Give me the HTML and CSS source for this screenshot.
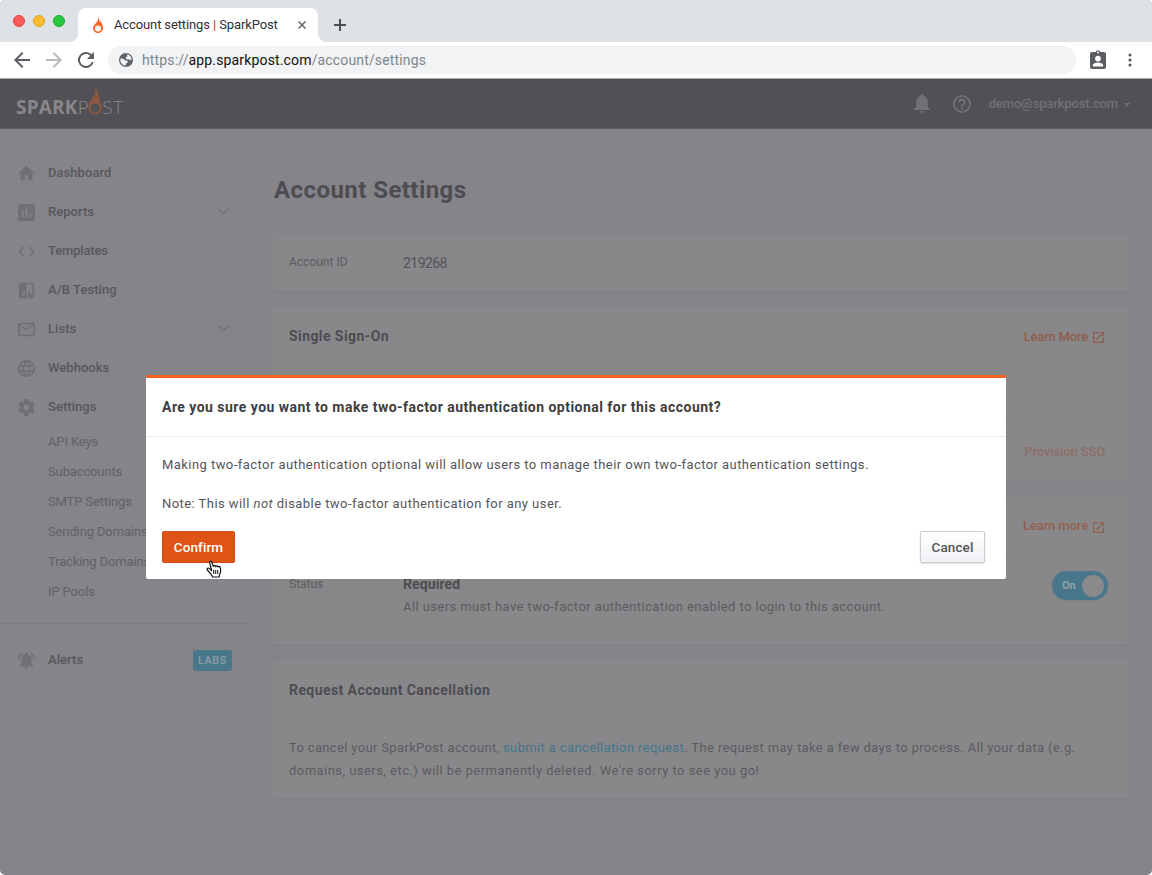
FILE: index.html
```html
<!DOCTYPE html>
<html lang="en">
<head>
<meta charset="utf-8">
<title>Account settings | SparkPost</title>
<link rel="stylesheet" href="styles.css">
</head>
<body>
<div class="window">
  <div class="tabstrip">
    <div class="lights"><i class="light red"></i><i class="light yellow"></i><i class="light green"></i></div>
    <div class="tab">
      <svg class="favicon" width="10" height="18" viewBox="0 0 20 34"><path fill="#fa6423" fill-rule="evenodd" d="M10 0c3 5 2 8 3 11 1-1 1-2 1-3 3 5 6 9 6 14a10 10 0 0 1-20 2c0-6 4-8 7-12 3-4 4-7 3-12zM10 18a6 6 0 1 0 0 12 6 6 0 0 0 0-12z"/></svg>
      <span class="tab-title">Account settings <b>|</b> SparkPost</span>
      <svg class="tab-close" width="8" height="8" viewBox="0 0 8 8"><path d="M.5.5l7 7M7.500.5l-7 7" stroke="#5f6368" stroke-width="1.5"/></svg>
    </div>
    <svg class="newtab" width="12" height="12" viewBox="0 0 12 12"><path d="M6 0v12M0 6h12" stroke="#4d5156" stroke-width="2"/></svg>
  </div>
  <div class="toolbar">
    <svg width="16" height="16" viewBox="4 4 16 16"><path fill="#5a5d62" d="M20 11H7.830l5.590-5.590L12 4l-8 8 8 8 1.410-1.410L7.830 13H20z"/></svg>
    <svg width="16" height="16" viewBox="4 4 16 16"><path fill="#b9bbbd" d="M12 4l-1.410 1.410L16.170 11H4v2h12.170l-5.580 5.590L12 20l8-8z"/></svg>
    <svg width="16" height="16" viewBox="4 4 16 16"><path fill="#5a5d62" d="M17.650 6.350A8 8 0 1 0 19.730 14h-2.080A6 6 0 1 1 12 6c1.660 0 3.140.69 4.220 1.780L13 11h7V4z"/></svg>
    <div class="address">
      <svg width="14" height="14" viewBox="0 0 14 14"><circle cx="7" cy="7" r="7" fill="#5f6368"/><path fill="#f1f3f4" d="M7.500 1.300c2.800.2 4.900 2.400 5.200 5l-1.500.9-1.300-.9-1.800.2-1.400-1.200.6-1.500 1.400-.6zM1.500 5.500l3 .3 1.700 1.600 2.200.4.400 1.500-1.600 1.100-.6 2.200C3.700 12.300 1.300 9.800 1.300 7z"/></svg>
      <span class="url">https://<b>app.sparkpost.com</b>/account/settings</span>
    </div>
    <svg class="badge-icon" width="16" height="19" viewBox="0 0 16 19"><path fill="#5a5d62" fill-rule="evenodd" d="M2 2h3.700a2.400 2.400 0 0 1 4.600 0H14a2 2 0 0 1 2 2v13a2 2 0 0 1-2 2H2a2 2 0 0 1-2-2V4a2 2 0 0 1 2-2zM8 1.500a1 1 0 1 0 0 2 1 1 0 0 0 0-2zM8 5.700a2.900 2.900 0 1 0 0 5.800 2.900 2.900 0 0 0 0-5.800zM2.800 16.500h10.400v-1.200c0-2-3.400-2.900-5.200-2.900s-5.200.9-5.200 2.900z"/></svg>
    <svg width="4" height="14" viewBox="0 0 4 14"><g fill="#4f5257"><circle cx="2" cy="2" r="1.500"/><circle cx="2" cy="7" r="1.500"/><circle cx="2" cy="12" r="1.500"/></g></svg>
  </div>

  <header class="topbar">
    <div class="logo"><strong>SPARK</strong><span class="logo-p">P</span><svg class="flame" width="14" height="28" viewBox="0 0 14 29"><path fill="#8a5743" fill-rule="evenodd" d="M6.500 0c3.700 3.600 4 6.500 3.500 10 .7-.5.900-1.200.9-2 1 3 .5 5 1.100 7.500 1 2 2 3.500 2 6A7 7 0 0 1 0 21.500C0 16 2.400 13.500 4.800 10.500 7 7.500 8 4 6.500 0zM7 17a4.800 4.800 0 1 0 0 9.600A4.800 4.800 0 0 0 7 17z"/></svg><span class="logo-st">ST</span></div>
    <div class="account">
      <svg width="16" height="19" viewBox="4 2.500 16 19.500"><path fill="#717075" d="M12 22a2 2 0 0 0 2-2h-4a2 2 0 0 0 2 2zm6-6v-5c0-3.070-1.640-5.640-4.500-6.320V4a1.500 1.500 0 0 0-3 0v.68C7.630 5.360 6 7.920 6 11v5l-2 2v1h16v-1z"/></svg>
      <svg width="18" height="18" viewBox="2 2 20 20"><path fill="#717075" d="M11 18h2v-2h-2zM12 2a10 10 0 1 0 0 20 10 10 0 0 0 0-20zm0 18a8 8 0 1 1 0-16 8 8 0 0 1 0 16zm0-14a4 4 0 0 0-4 4h2a2 2 0 0 1 4 0c0 2-3 1.750-3 5h2c0-2.250 3-2.500 3-5a4 4 0 0 0-4-4z"/></svg>
      <span class="email">demo@sparkpost.com</span><i class="caret"></i>
    </div>
  </header>

  <div class="body">
    <nav class="sidebar">
      <a class="item"><svg viewBox="2 2 20 20"><path d="M10 20v-6h4v6h5v-8h3L12 3 2 12h3v8z"/></svg><span>Dashboard</span></a>
      <a class="item"><svg viewBox="3 3 18 18"><path d="M19 3H5a2 2 0 0 0-2 2v14c0 1.100.9 2 2 2h14a2 2 0 0 0 2-2V5a2 2 0 0 0-2-2zM9 17H7v-7h2zm4 0h-2V7h2zm4 0h-2v-4h2z"/></svg><span>Reports</span><svg class="chev" viewBox="0 0 10 6"><path d="M.5.5L5 5 9.500.5"/></svg></a>
      <a class="item tight"><svg viewBox="2 2 20 20"><path d="M9.400 16.600L4.800 12l4.600-4.600L8 6l-6 6 6 6zm5.200 0l4.600-4.600-4.600-4.600L16 6l6 6-6 6z"/></svg><span>Templates</span></a>
      <a class="item"><svg viewBox="2 2 20 20"><path d="M10 3H5a2 2 0 0 0-2 2v14c0 1.100.9 2 2 2h5v2h2V1h-2zm0 15H5l5-6zm9-15h-5v2h5v13l-5-6v9h5a2 2 0 0 0 2-2V5a2 2 0 0 0-2-2z"/></svg><span>A/B Testing</span></a>
      <a class="item"><svg viewBox="2 2 20 20"><path d="M20 4H4a2 2 0 0 0-2 2v12c0 1.100.9 2 2 2h16a2 2 0 0 0 2-2V6a2 2 0 0 0-2-2zm0 14H4V8l8 5 8-5zm-8-7L4 6h16z"/></svg><span>Lists</span><svg class="chev" viewBox="0 0 10 6"><path d="M.5.5L5 5 9.500.5"/></svg></a>
      <a class="item"><svg viewBox="2 2 20 20"><path d="M11.990 2a10 10 0 1 0 .02 20 10 10 0 0 0-.02-20zm6.930 6h-2.950a15.650 15.650 0 0 0-1.380-3.560A8.030 8.030 0 0 1 18.920 8zM12 4.040c.83 1.200 1.480 2.530 1.910 3.960h-3.820c.43-1.430 1.080-2.760 1.910-3.960zM4.260 14a8.200 8.200 0 0 1 0-4h3.380a16.500 16.500 0 0 0 0 4zm.82 2h2.950c.32 1.250.78 2.450 1.380 3.560A7.990 7.990 0 0 1 5.080 16zm2.950-8H5.080a7.990 7.990 0 0 1 4.330-3.560A15.650 15.650 0 0 0 8.030 8zM12 19.960A14.090 14.090 0 0 1 10.090 16h3.820A14.090 14.090 0 0 1 12 19.960zM14.340 14H9.660a14.700 14.700 0 0 1 0-4h4.680a14.700 14.700 0 0 1 0 4zm.25 5.560c.6-1.110 1.060-2.310 1.380-3.560h2.950a8.030 8.030 0 0 1-4.330 3.560zM16.360 14a16.500 16.500 0 0 0 0-4h3.380a8.200 8.200 0 0 1 0 4z"/></svg><span>Webhooks</span></a>
      <a class="item"><svg viewBox="2 2 20 20"><path d="M19.430 12.980a7.800 7.800 0 0 0 0-1.960l2.110-1.650c.19-.15.240-.42.120-.64l-2-3.460a.5.500 0 0 0-.61-.22l-2.490 1a7.300 7.300 0 0 0-1.690-.98l-.38-2.650A.49.490 0 0 0 14 2h-4a.49.490 0 0 0-.49.420l-.38 2.650c-.61.250-1.170.59-1.690.98l-2.490-1a.5.500 0 0 0-.61.220l-2 3.460a.5.500 0 0 0 .12.640l2.110 1.650a7.900 7.900 0 0 0 0 1.960l-2.110 1.650a.5.500 0 0 0-.12.640l2 3.460c.12.220.39.300.61.220l2.490-1c.52.400 1.080.73 1.690.98l.38 2.650c.03.240.24.420.49.420h4c.25 0 .46-.18.490-.42l.38-2.650a7.700 7.700 0 0 0 1.690-.98l2.490 1c.23.090.49 0 .61-.22l2-3.460a.5.500 0 0 0-.12-.64zM12 15.500a3.500 3.500 0 1 1 0-7 3.500 3.500 0 0 1 0 7z"/></svg><span>Settings</span></a>
      <div class="subnav"><a>API Keys</a><a>Subaccounts</a><a>SMTP Settings</a><a>Sending Domains</a><a>Tracking Domains</a><a>IP Pools</a></div>
      <div class="divider"></div>
      <a class="item"><svg viewBox="2 2 20 20"><path d="M7.580 4.080L6.150 2.650A10.430 10.430 0 0 0 2.030 10.500h2a8.450 8.450 0 0 1 3.550-6.420zM19.970 10.500h2a10.490 10.490 0 0 0-4.120-7.850l-1.420 1.430a8.500 8.500 0 0 1 3.540 6.420zM18 11c0-3.070-1.640-5.640-4.500-6.320V4a1.500 1.500 0 0 0-3 0v.68C7.630 5.360 6 7.920 6 11v5l-2 2v1h16v-1l-2-2zm-6 11a2 2 0 0 0 2-2h-4a2 2 0 0 0 2 2z"/></svg><span>Alerts</span><em class="labs">LABS</em></a>
    </nav>

    <main class="content">
      <h1>Account Settings</h1>
      <section class="card id-card"><span class="label">Account ID</span><span class="value">219268</span></section>
      <section class="card sso">
        <div class="card-head"><h2>Single Sign-On</h2><a class="more">Learn More<svg width="11" height="11" viewBox="3 3 18 18"><path d="M19 19H5V5h7V3H3v18h18v-9h-2zM14 3v2h3.590l-9.830 9.830 1.410 1.410L19 6.410V10h2V3z"/></svg></a></div>
        <div class="sso-status"></div>
        <div class="sso-foot"><a class="provision">Provision SSO</a></div>
      </section>
      <section class="card tfa">
        <div class="card-head"><h2></h2><a class="more bright">Learn more<svg width="11" height="11" viewBox="3 3 18 18"><path d="M19 19H5V5h7V3H3v18h18v-9h-2zM14 3v2h3.590l-9.830 9.830 1.410 1.410L19 6.410V10h2V3z"/></svg></a></div>
        <div class="tfa-row">
          <span class="label">Status</span>
          <div class="tfa-text"><strong>Required</strong><p>All users must have two-factor authentication enabled to login to this account.</p></div>
          <div class="toggle"><span>On</span><i></i></div>
        </div>
      </section>
      <section class="card cancel-card">
        <div class="card-head"><h2>Request Account Cancellation</h2></div>
        <p class="copy"><span class="copy-start">To cancel your SparkPost account, </span><a>submit a cancellation request</a>. The request may take a few days to process. All your data (e.g.<br><span class="copy-end">domains, users, etc.) will be permanently deleted. We're sorry to see you go!</span></p>
      </section>
    </main>
  </div>

  <div class="modal">
    <h3>Are you sure you want to make two-factor authentication optional for this account?</h3>
    <div class="modal-body">
      <p class="m1">Making two-factor authentication optional will allow users to manage their own two-factor authentication settings.</p>
      <p class="m2">Note: This will <em>not</em> disable two-factor authentication for any user.</p>
      <div class="actions"><button class="btn confirm">Confirm</button><button class="btn cancel">Cancel</button></div>
    </div>
  </div>
  <svg class="pointer" width="16" height="18" viewBox="0 0 16 18"><path fill="#fff" stroke="#111" stroke-width="1.200" stroke-linejoin="round" d="M5.600 10.500L3.700 2.900C3.300 1.200 5.300.6 5.800 2.100L7.200 6.400C7.300 5 9.200 4.900 9.600 6.600 9.900 5.400 11.500 5.500 12 7c.4-1 2-.8 2.300.6.400 2 .9 4.800-.8 7l-.4 2.400H6.700C5.500 14.400 3.300 12.600 1.500 10.100.4 8.500 2.200 7.300 3.400 8.600z"/><path stroke="#111" d="M7.700 10v4M9.700 10v4M11.700 10v4"/></svg>
</div>
</body>
</html>
```
FILE: styles.css
```css
* { box-sizing: border-box; }
body { margin: 0; background: #fff; font-family: Roboto, "Liberation Sans", sans-serif; }
h1, h2, h3, p { margin: 0; }
svg { flex: none; display: block; }

.window { position: relative; width: 1152px; height: 875px; overflow: hidden; border-radius: 5px; background: #858489; display: flex; flex-direction: column; }

.tabstrip { height: 42px; background: #dee1e6; display: flex; align-items: flex-end; flex: none; }
.lights { display: flex; gap: 8px; padding-left: 13px; width: 78px; align-self: flex-start; margin-top: 15px; }
.light { width: 12px; height: 12px; border-radius: 50%; }
.red { background: #fc5b57; border: 1px solid #e0443e; }
.yellow { background: #fdbc2f; border: 1px solid #e0a123; }
.green { background: #29c941; border: 1px solid #1dac2b; }
.tab { position: relative; width: 240px; height: 34px; background: #fff; border-radius: 8px 8px 0 0; display: flex; align-items: center; padding: 0 12px 0 15px; }
.tab::before, .tab::after { content: ""; position: absolute; bottom: 0; width: 8px; height: 8px; }
.tab::before { left: -8px; background: radial-gradient(circle at 0 0, transparent 7.500px, #fff 8px); }
.tab::after { right: -8px; background: radial-gradient(circle at 100% 0, transparent 7.500px, #fff 8px); }
.tab-title { margin-left: 11px; padding-bottom: 2px; font-size: 13px; letter-spacing: -.12px; color: #2f3135; white-space: nowrap; }
.tab-title b { font-weight: 400; color: #a83232; }
.tab-close { margin-left: auto; }
.newtab { margin: 0 0 11px 16px; }

.toolbar { height: 37px; flex: none; background: #fff; border-bottom: 1px solid #a9a9ab; display: flex; align-items: center; padding: 0 20px 0 14px; gap: 16px; }
.address { flex: 1; height: 28px; border-radius: 14px; background: #f1f3f4; display: flex; align-items: center; gap: 9px; padding-left: 11px; margin-left: -2px; margin-right: -2px; }
.url { font-size: 14px; letter-spacing: .15px; color: #80868b; }
.url b { font-weight: 400; color: #111; }
.badge-icon { margin: -1px 6px 0 0; }

.topbar { height: 50px; flex: none; background: #515055; border-bottom: 1px solid #605f64; display: flex; justify-content: space-between; padding: 0 22px 0 16px; }
.logo { display: flex; align-items: flex-start; padding-top: 8px; font-family: "Open Sans", sans-serif; font-size: 19px; line-height: 41px; color: #88878b; }
.logo strong { font-weight: 700; letter-spacing: .2px; }
.logo span { font-weight: 300; }
.logo .flame { margin: 0 0 0 -.5px; }
.logo .logo-st { letter-spacing: .5px; }
.account { display: flex; align-items: center; color: #717075; }
.account svg + svg { margin-left: 23px; }
.email { margin-left: 18px; font-size: 13px; font-weight: 500; letter-spacing: -.14px; }
.caret { margin: 3px 0 0 6px; border: 3.500px solid transparent; border-top: 4px solid #717075; border-bottom: 0; }

.body { display: flex; flex: 1; }
.sidebar { width: 249px; border-right: 1px solid #818085; padding-top: 24px; }
.item { height: 39px; display: flex; align-items: center; padding: 0 16px 0 18px; color: #58575c; font-size: 13px; font-weight: 500; letter-spacing: .05px; }
.item.tight { letter-spacing: -.15px; }
.item > svg:first-child { width: 17px; height: 17px; fill: #706f74; margin-top: 1px; }
.item span { margin-left: 13px; }
.item .chev { width: 11px; height: 7px; margin-left: auto; margin-right: 3px; fill: none; stroke: #706f74; stroke-width: 1.200; }
.subnav { padding-top: 1px; }
.subnav a { display: block; height: 30px; line-height: 30px; padding-left: 48px; font-size: 13px; letter-spacing: -.13px; color: #626166; }
.divider { height: 1px; background: #7e7d82; margin: 16px 0; }
.labs { margin: 2px 0 0 auto; width: 39px; height: 21px; border-radius: 3px; background: #4a788b; color: #8b9da6; font-size: 11px; font-weight: 500; font-style: normal; letter-spacing: .5px; line-height: 21px; text-align: center; }

.content { flex: 1; padding: 43px 24px 0; }
h1 { font-size: 24px; line-height: 37px; height: 62px; font-weight: 700; letter-spacing: .44px; padding-left: 1px; color: #4d4c51; }
.card { background: #88888a; margin-bottom: 16px; border-radius: 2px; box-shadow: 0 1px 1px #7f7e83; font-size: 13px; color: #5b5b5f; }
.label { width: 114px; font-size: 12px; color: #5b5b60; }
.id-card { height: 57px; display: flex; padding: 0 16px 2px; align-items: center; }
.value { font-size: 14px; color: #535257; padding-top: 2px; letter-spacing: -.55px; }
.card-head { height: 60px; border-bottom: 1px solid #838385; display: flex; justify-content: space-between; align-items: center; padding: 0 24px 1px 16px; }
h2 { font-size: 14px; font-weight: 700; letter-spacing: .42px; color: #4d4c51; }
.more { display: flex; align-items: center; gap: 5px; color: #8e5d4d; font-weight: 500; letter-spacing: -.2px; }
.more svg { fill: currentColor; margin-top: 2px; }
.more.bright { color: #935f4e; letter-spacing: -.12px; }
.more.bright svg { margin-top: 4px; }
.sso { height: 174px; }
.sso-status { height: 56px; border-bottom: 1px solid #838385; }
.sso-foot { height: 58px; padding: 0 23px 2px; display: flex; justify-content: flex-end; align-items: center; }
.provision { color: #8b6e66; font-weight: 500; letter-spacing: -.12px; }
.tfa { height: 148px; }
.tfa .card-head, .cancel-card .card-head { height: 59px; }
.tfa-row { display: flex; padding: 15px 20px 0 16px; }
.tfa-row .label { padding-top: 6px; }
.tfa-text { flex: 1; line-height: 22px; padding-top: 2px; }
.tfa-text strong { font-size: 14px; letter-spacing: .1px; color: #4d4c51; }
.tfa-text p { letter-spacing: .41px; }
.toggle { width: 56px; height: 29px; border-radius: 15px; background: #48778c; display: flex; align-items: center; justify-content: space-between; padding: 0 4px 0 10px; font-size: 11px; font-weight: 700; color: #93a1a7; box-shadow: 0 1px 2px #7f7e83; }
.toggle i { width: 22px; height: 22px; border-radius: 50%; background: #8a8a8c; }
.cancel-card { height: 137px; }
.copy { padding: 16px 16px 0; line-height: 23px; letter-spacing: .37px; white-space: nowrap; }
.copy-start { letter-spacing: .34px; }
.copy-end { letter-spacing: .46px; }
.copy a { color: #44758a; }

.modal { position: absolute; left: 146px; top: 375px; width: 860px; height: 204px; background: #fff; border-top: 3px solid #fa6423; border-radius: 1px 1px 2px 2px; white-space: nowrap; }
h3 { height: 59px; line-height: 59px; padding-left: 16px; border-bottom: 1px solid #ededf0; font-size: 14px; font-weight: 700; letter-spacing: .47px; color: #3e3d42; }
.modal-body { padding: 16px 21px 0 16px; font-size: 13px; line-height: 23px; color: #55555a; letter-spacing: .44px; }
.m2 { margin-top: 16px; }
.actions { display: flex; justify-content: space-between; margin-top: 16px; }
.btn { height: 32px; padding: 0; border-radius: 2px; font: 500 13.500px Roboto, sans-serif; letter-spacing: .1px; }
.confirm { width: 73px; background: #de5316; border: 1px solid #d24a0f; color: #fff; }
.cancel { width: 65px; background: linear-gradient(#fff, #f1f1f5); border: 1px solid #cbcbd0; color: #55555a; box-shadow: 0 1px 2px #ddd; }
.pointer { position: absolute; left: 206px; top: 560px; }
```
